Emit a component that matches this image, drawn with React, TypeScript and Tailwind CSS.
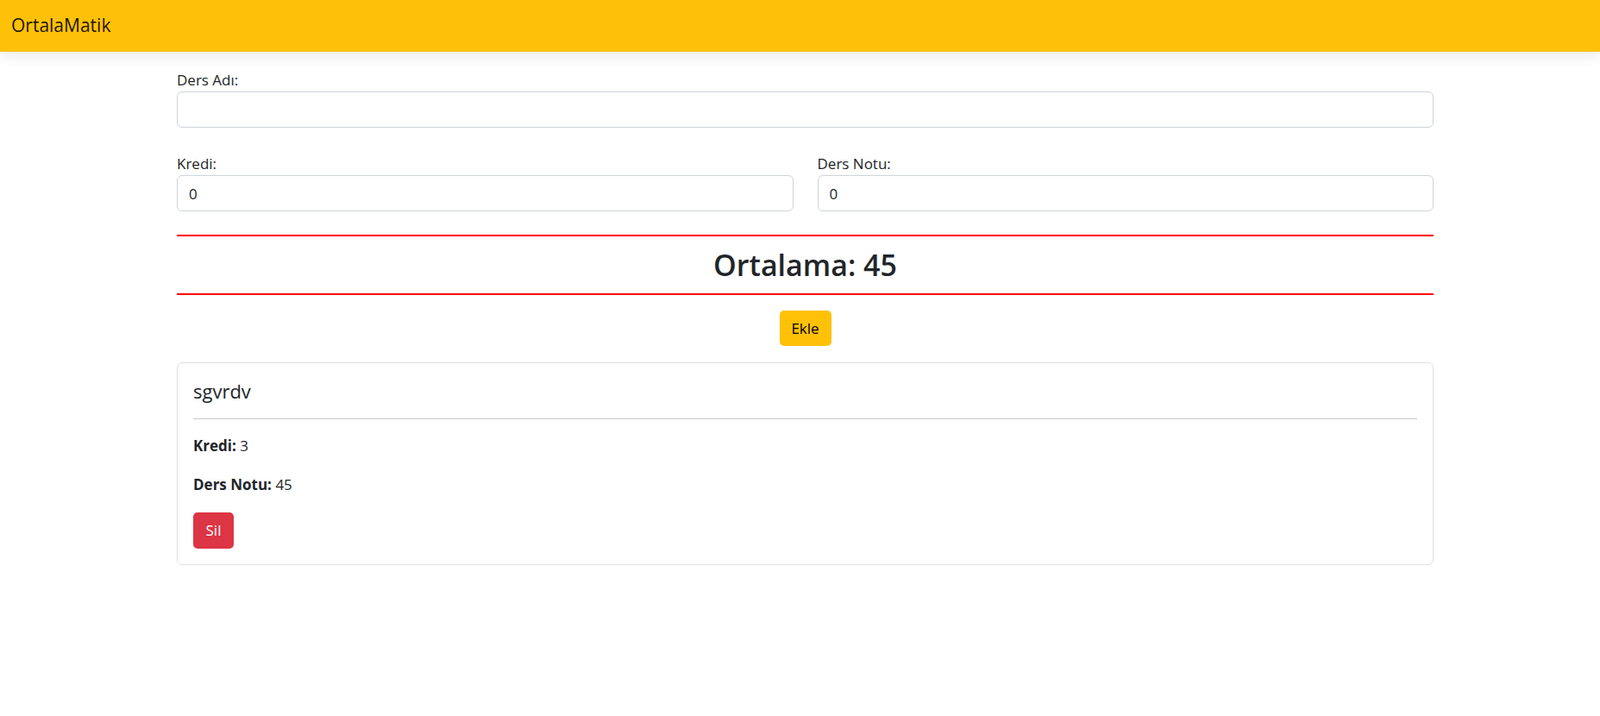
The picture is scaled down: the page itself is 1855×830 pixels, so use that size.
export default function App() {
  const courses = [{ name: "sgvrdv", kredi: 3, not: 45 }];

  return (
    <div className="min-h-screen bg-white font-['Open_Sans','Noto_Sans',sans-serif] text-[#212529]">
      <nav className="relative z-10 flex h-[60px] items-center bg-[#ffc107] px-[13px] shadow-[0_6px_14px_rgba(0,0,0,0.08)]">
        <span className="text-[21px] text-black/90">OrtalaMatik</span>
      </nav>

      <main className="ml-[205px] w-[1457px] pt-[20px]">
        {/* ders adı */}
        <label className="block h-[26px] text-[17px] leading-[26px]">Ders Adı:</label>
        <input
          type="text"
          className="block h-[42px] w-full rounded-[6px] border border-[#ced4da] px-[13px] text-[17px] outline-none"
        />

        <div className="mt-[29px] grid grid-cols-2 gap-[28px]">
          <div>
            <label className="block h-[26px] text-[17px] leading-[26px]">Kredi:</label>
            <input
              type="number"
              defaultValue={0}
              className="block h-[42px] w-full rounded-[6px] border border-[#ced4da] px-[13px] text-[17px] outline-none"
            />
          </div>
          <div>
            <label className="block h-[26px] text-[17px] leading-[26px]">Ders Notu:</label>
            <input
              type="number"
              defaultValue={0}
              className="block h-[42px] w-full rounded-[6px] border border-[#ced4da] px-[13px] text-[17px] outline-none"
            />
          </div>
        </div>

        <div className="mt-[27px] border-y-2 border-[#ff0000] py-[12px] text-center">
          <h2 className="text-[34px] font-semibold leading-[42px]">Ortalama: 45</h2>
        </div>

        <div className="mt-[18px] flex justify-center">
          <button className="h-[41px] w-[60px] rounded-[5px] bg-[#ffc107] text-[17px] text-black">Ekle</button>
        </div>

        {courses.map((c, i) => (
          <div key={i} className="mt-[19px] rounded-[6px] border border-[#dfdfdf] p-[18px] pt-[19px]">
            <h5 className="text-[22px] font-medium leading-[26px]">{c.name}</h5>
            <hr className="mt-[19px] mb-[18px] border-t border-[#c8c9ca]" />
            <p className="mb-[19px] text-[17px] leading-[26px]">
              <span className="font-bold">Kredi:</span> {c.kredi}
            </p>
            <p className="mb-[19px] text-[17px] leading-[26px]">
              <span className="font-bold">Ders Notu:</span> {c.not}
            </p>
            <button className="h-[42px] w-[47px] rounded-[5px] bg-[#dc3545] text-[17px] text-white">Sil</button>
          </div>
        ))}
      </main>
    </div>
  );
}
